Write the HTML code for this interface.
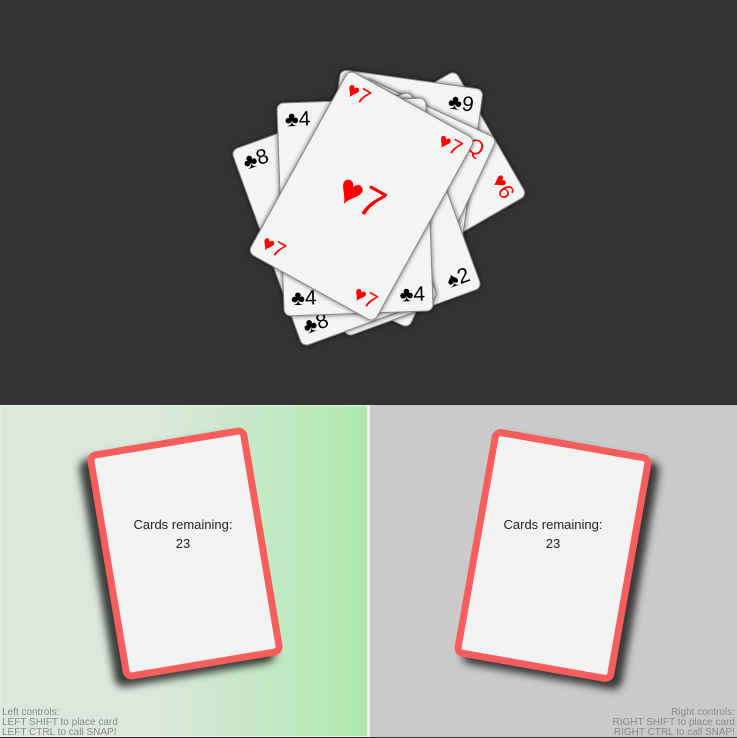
<!DOCTYPE html>
<html><head><meta charset="utf-8"><style>
*{margin:0;padding:0;box-sizing:border-box}
body{width:737px;height:737px;overflow:hidden;background:#333;font-family:"Liberation Sans",sans-serif;position:relative}
.top{position:absolute;left:0;top:0;width:737px;height:405px;background:#333}
.card{position:absolute;width:145px;height:210px;background:#f4f4f4;border-radius:7px;box-shadow:0 0 5px rgba(0,0,0,.6);border:1px solid #888}
.l{position:absolute;font-size:21px;line-height:21px;white-space:nowrap}
.tl{left:7px;top:6px}.tr{right:7px;top:6px}.bl{left:7px;bottom:6px}.br{right:7px;bottom:6px}
.r{color:#f00}.k{color:#000}
.c{position:absolute;left:0;right:0;top:84px;text-align:center;font-size:42px;line-height:42px}
.lp{position:absolute;left:0;top:405px;width:368px;height:332px;background:linear-gradient(90deg,#dde8dd 0%,#dde8dd 40%,#aee9ae 100%);border:1px solid #e6ece6}
.rp{position:absolute;left:370px;top:405px;width:367px;height:332px;background:#cacaca}
.div{position:absolute;left:368px;top:405px;width:2px;height:332px;background:#eee}
.pc{position:absolute;width:162px;height:231px;border:7px solid #f65e5e;background:#f2f2f2;border-radius:9px}
.txt{position:absolute;width:200px;text-align:center;font-size:13px;color:#222;line-height:19px}
.ctl{position:absolute;font-size:10px;line-height:10px;color:#888}
</style></head><body>
<div class="top"></div>

<div class="card" style="left:328px;top:80px;transform:rotate(60deg)">
 <span class="l tl r">♥6</span><span class="l tr r">♥6</span><span class="l bl r">♥6</span><span class="l br r">♥6</span></div>
<div class="card" style="left:325px;top:78px;transform:rotate(8deg)">
 <span class="l tl k">♣9</span><span class="l tr k">♣9</span></div>
<div class="card" style="left:315px;top:98px;transform:rotate(25deg)">
 <span class="l tl r">♥Q</span><span class="l tr r">♥Q</span><span class="l bl r">♥Q</span><span class="l br r">♥Q</span></div>
<div class="card" style="left:306px;top:109px;transform:rotate(-20deg)">
 <span class="l tl k">♠2</span><span class="l tr k">♠2</span><span class="l bl k">♠2</span><span class="l br k">♠2</span></div>
<div class="card" style="left:262px;top:119px;transform:rotate(-20deg)">
 <span class="l tl k">♣8</span><span class="l tr k">♣8</span><span class="l bl k">♣8</span><span class="l br k">♣8</span></div>
<div class="card" style="left:280px;top:100px;width:150px;height:214px;transform:rotate(-2deg)">
 <span class="l tl k">♣4</span><span class="l tr k">♣4</span><span class="l bl k">♣4</span><span class="l br k">♣4</span></div>
<div class="card" style="left:289px;top:91px;transform:rotate(29deg)">
 <span class="l tl r">♥7</span><span class="l tr r">♥7</span><span class="l bl r">♥7</span><span class="l br r">♥7</span>
 <div class="c r">♥7</div></div>

<div class="lp"></div>
<div class="rp"></div>
<div class="div"></div>

<div class="pc" style="left:104px;top:438px;transform:rotate(-9.5deg);box-shadow:-9px 6px 8px rgba(30,30,30,.85)"></div>
<div class="txt" style="left:83px;top:515px">Cards remaining:<br>23</div>
<div class="pc" style="left:472px;top:440px;transform:rotate(10deg);box-shadow:9px 6px 8px rgba(30,30,30,.85)"></div>
<div class="txt" style="left:453px;top:515px">Cards remaining:<br>23</div>

<div class="ctl" style="left:2px;top:708px">Left controls:<br>LEFT SHIFT to place card<br>LEFT CTRL to call SNAP!</div>
<div class="ctl" style="right:2px;top:708px;text-align:right">Right controls:<br>RIGHT SHIFT to place card<br>RIGHT CTRL to call SNAP!</div>
</body></html>
